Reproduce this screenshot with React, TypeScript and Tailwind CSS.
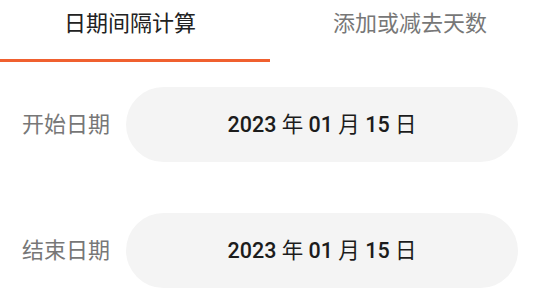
import { useState } from "react"

const font = { fontFamily: '"Roboto", "Noto Sans CJK SC", sans-serif' }

function DateRow({ label, value }: { label: string; value: string }) {
  return (
    <div className="flex items-center">
      <div className="w-[126px] pl-[22px] text-[22px] leading-[30px] text-[#777777]">
        {label}
      </div>
      <div className="w-[392px] h-[75px] rounded-full bg-[#f4f4f4] flex items-center justify-center">
        <span className="font-['Roboto_Medium','Roboto','Noto_Sans_CJK_SC',sans-serif] text-[21.5px] font-normal text-[#1c1c1c] leading-[30px]">
          {value}
        </span>
      </div>
    </div>
  )
}

export default function App() {
  const [tab, setTab] = useState(0)

  return (
    <main className="w-[534px] h-[298px] bg-white overflow-hidden" style={font}>
      <div className="flex h-[62px]">
        <button
          className="w-[270px] flex flex-col items-stretch"
          onClick={() => setTab(0)}
        >
          <span
            className={
              "h-[59px] pt-[9px] pr-[10px] text-center text-[22px] leading-[30px] " +
              (tab === 0 ? "text-[#222222]" : "text-[#777777]")
            }
          >
            日期间隔计算
          </span>
          <span
            className={"h-[3px] " + (tab === 0 ? "bg-[#f0602f]" : "bg-transparent")}
          />
        </button>
        <button
          className="flex-1 flex flex-col items-stretch"
          onClick={() => setTab(1)}
        >
          <span
            className={
              "h-[59px] pt-[9px] pl-[16px] text-center text-[22px] leading-[30px] " +
              (tab === 1 ? "text-[#222222]" : "text-[#777777]")
            }
          >
            添加或减去天数
          </span>
          <span
            className={"h-[3px] " + (tab === 1 ? "bg-[#f0602f]" : "bg-transparent")}
          />
        </button>
      </div>
      <section className="flex flex-col gap-[51px] pt-[25px]">
        <DateRow label="开始日期" value="2023 年 01 月 15 日" />
        <DateRow label="结束日期" value="2023 年 01 月 15 日" />
      </section>
    </main>
  )
}
